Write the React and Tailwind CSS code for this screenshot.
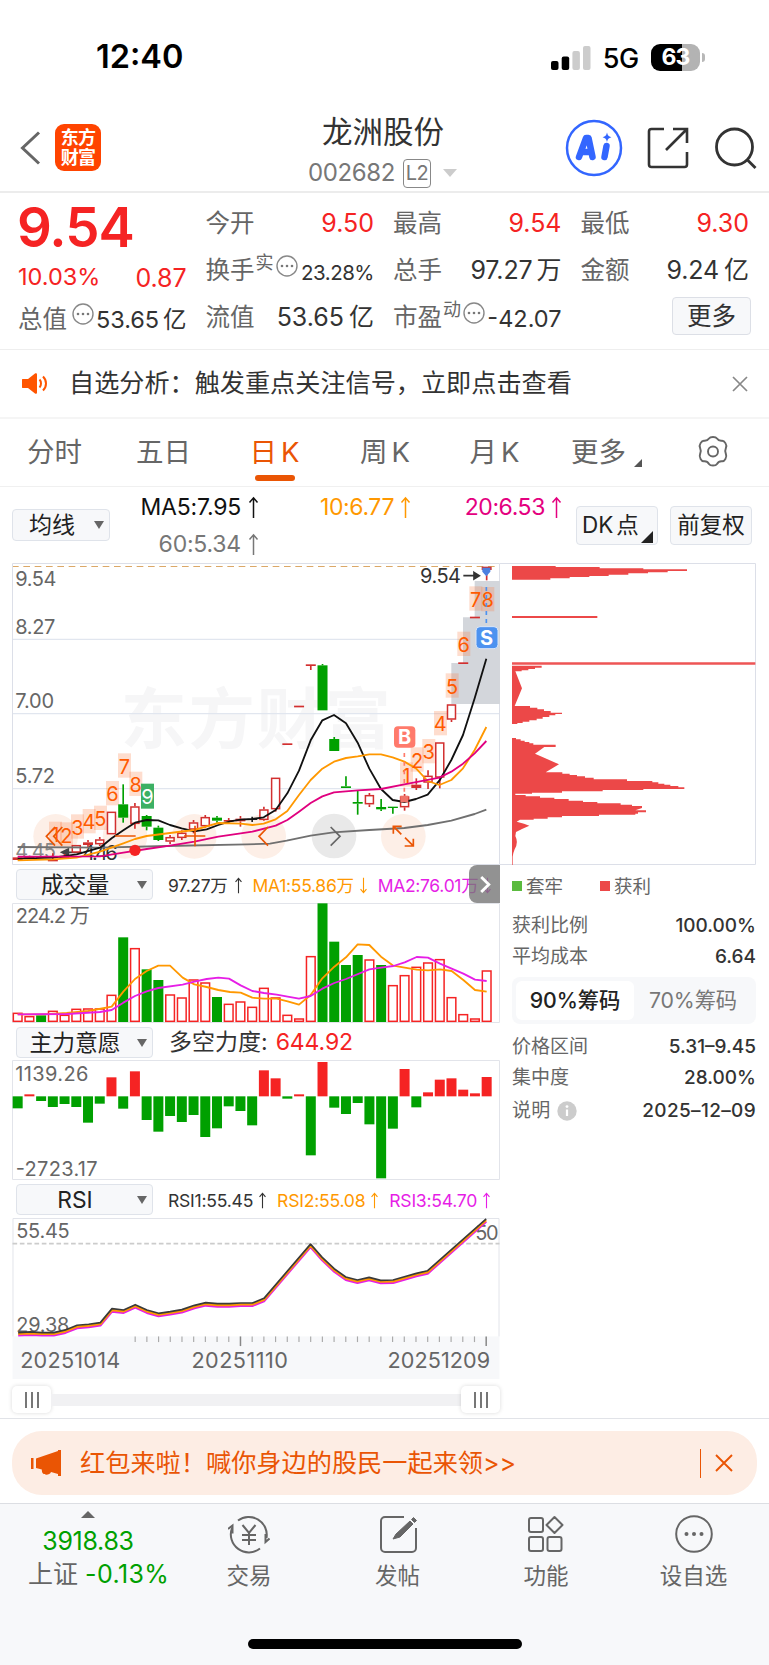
import React from "react";

const ORANGE = "#ff9800";
const MAGENTA = "#e61ee6";
const RED = "#f52323";
const GREEN = "#00a000";

// charts are drawn on a 3x grid, one candle every STEP units
const STEP = 35.175;
const barX = (i) => 53 + i * STEP;

const candles = [
  { t: "r", o: 907, c: 915 },
  { t: "r", o: 905, c: 911 },
  { t: "r", o: 903, c: 909 },
  { t: "r", o: 914, c: 919, h: 895 },
  { t: "r", o: 905, c: 911, h: 897 },
  { t: "h", o: 870, c: 893 },
  { t: "r", o: 862, c: 870, h: 855, l: 877 },
  { t: "h", o: 853, c: 868, h: 846, l: 873 },
  { t: "h", o: 770, c: 838 },
  { t: "g", o: 748, c: 788, h: 688, l: 803 },
  { t: "h", o: 754, c: 807, h: 744, l: 821 },
  { t: "g", o: 783, c: 815, h: 780, l: 826 },
  { t: "g", o: 818, c: 855, h: 812, l: 858 },
  { t: "h", o: 846, c: 860, h: 840, l: 867 },
  { t: "h", o: 833, c: 849, h: 826, l: 855 },
  { t: "h", o: 802, c: 824, h: 795, l: 835 },
  { t: "h", o: 786, c: 814, h: 780, l: 818 },
  { t: "g", o: 788, c: 797, h: 783, l: 803 },
  { t: "r", o: 795, c: 800, h: 789, l: 804 },
  { t: "r", o: 791, c: 799, h: 783, l: 815 },
  { t: "k", o: 792, c: 795, h: 785, l: 801 },
  { t: "h", o: 763, c: 795, h: 755, l: 797 },
  { t: "h", o: 668, c: 763, h: 668, l: 770 },
  { t: "r", o: 565, c: 570 },
  { t: "r", o: 452, c: 457 },
  { t: "r", o: 328, c: 333, l: 345 },
  { t: "g", o: 331, c: 466, h: 327 },
  { t: "g", o: 552, c: 588, h: 546 },
  { t: "g", o: 694, c: 699, h: 664 },
  { t: "g", o: 741, c: 746, h: 708, l: 779 },
  { t: "h", o: 720, c: 748, h: 714, l: 756 },
  { t: "g", o: 756, c: 763, h: 732, l: 768 },
  { t: "g", o: 755, c: 759, l: 776 },
  { t: "h", o: 724, c: 757, h: 717, l: 767 },
  { t: "r", o: 689, c: 699, h: 670, l: 705 },
  { t: "h", o: 662, c: 683, h: 646, l: 702 },
  { t: "h", o: 562, c: 668, l: 700 },
  { t: "h", o: 448, c: 494, l: 501 },
  { t: "r", o: 322, c: 327 },
  { t: "r", o: 185, c: 190 },
  { t: "r", o: 35, c: 45, l: 76 },
];

const volumes = [
  [458, 0], [468, 0], [466, 1], [452, 0], [464, 0], [446, 0], [445, 0], [445, 0], [404, 0], [232, 1],
  [264, 0], [328, 1], [360, 1], [403, 0], [412, 0], [358, 0], [367, 0], [411, 1], [431, 0], [424, 0],
  [440, 0], [383, 0], [412, 0], [464, 0], [475, 0], [288, 0], [130, 1], [245, 1], [315, 1], [285, 1],
  [298, 0], [315, 1], [375, 0], [345, 0], [320, 0], [307, 0], [297, 0], [411, 0], [462, 0], [475, 0],
  [331, 0],
];

const force = [
  250, 208, 228, 246, 237, 246, 293, 236, 157, 251, 139, 285, 320, 273, 291, 270, 336, 310, 244, 258, 301,
  136, 160, 221, 208, 391, 111, 248, 267, 234, 298, 460, 311, 132, 247, 202, 164, 160, 194, 205, 156,
];

const ma5 =
  "53,911 160,908 230,898 300,878 335,850 370,826 405,803 440,795 475,796 510,810 545,820 583,829 620,823 655,810 690,799 722,794 756,792 791,787 827,765 862,715 897,647 932,556 967,496 1002,480 1038,505 1073,563 1108,641 1143,702 1178,735 1213,741 1248,732 1283,719 1318,677 1354,615 1389,540 1424,430 1459,311";
const ma10 =
  "53,916 160,913 230,908 300,890 370,865 405,852 440,843 510,834 583,825 620,814 655,804 722,806 757,810 791,806 827,793 862,768 897,720 932,675 967,641 1002,620 1038,609 1073,604 1108,598 1143,598 1178,607 1213,620 1248,640 1283,678 1318,690 1354,675 1389,640 1424,585 1459,516";
const ma20 =
  "53,905 300,904 370,893 440,882 510,872 583,860 655,845 722,835 757,830 827,812 862,795 897,770 932,744 967,724 1002,712 1073,706 1143,702 1213,688 1318,668 1354,650 1389,626 1424,595 1459,558";
const ma60 =
  "53,876 300,878 500,873 740,868 810,866 860,857 932,842 1000,832 1108,825 1213,819 1283,810 1354,797 1424,777 1459,764";

const volMa1 =
  "53,463 130,463 200,459 265,453 335,440 370,395 405,357 440,333 475,317 510,317 548,353 583,373 620,381 655,390 690,396 722,398 757,413 792,416 830,416 863,424 897,434 932,405 967,355 1003,320 1038,292 1073,253 1108,255 1143,290 1180,317 1214,323 1250,329 1284,331 1320,328 1355,333 1390,360 1425,390 1460,395";
const volMa2 =
  "53,463 200,462 300,456 335,450 370,428 405,408 440,394 475,384 548,374 583,365 620,357 655,353 687,356 722,376 757,393 792,399 830,404 863,410 897,416 932,408 967,386 1003,369 1038,357 1108,328 1143,323 1180,318 1214,307 1250,291 1284,293 1320,311 1390,341 1425,359 1460,363";
const rsi =
  "53,371 90,369 125,371 160,371 195,363 230,349 265,346 300,341 335,299 370,303 405,287 440,303 475,313 510,308 545,302 583,289 617,281 652,284 687,284 722,282 757,282 792,268 932,105 967,145 1003,179 1038,204 1073,213 1108,205 1143,214 1180,213 1214,203 1250,193 1284,185 1460,29";

// nine-turn counters: [digit, x, y]
const counters = [
  ["1", 147, 800], ["2", 180, 802], ["3", 213, 778], ["4", 248, 762], ["5", 282, 752], ["6", 318, 678],
  ["7", 354, 595], ["8", 388, 650], ["1", 1200, 622], ["2", 1232, 577], ["3", 1267, 552], ["4", 1302, 468],
  ["5", 1337, 355], ["6", 1372, 230], ["7", 1408, 94], ["8", 1444, 96],
];

const Candle = ({ i, t, o, c, h = o, l = c }) => {
  const x = barX(i);
  const color = t === "g" ? GREEN : t === "k" ? "#222" : "#d22f2f";
  return (
    <g stroke={color} strokeWidth="5">
      {h < o && <path d={`M${x} ${h}V${o}`} />}
      {l > c && <path d={`M${x} ${c}V${l}`} />}
      {t === "h" ? (
        <rect x={x - 12} y={o + 2} width="24" height={c - o - 4} fill="#fff" strokeWidth="4.5" />
      ) : (
        <rect x={x - 15} y={o} width="30" height={c - o} fill={color} stroke="none" />
      )}
    </g>
  );
};

const T = ({ w, size = 60, children, ...rest }) => (
  <text fontSize={size} textLength={w} lengthAdjust="spacing" {...rest}>
    {children}
  </text>
);

const Up = ({ down, className = "w-[11px] h-[23px]" }) => (
  <svg viewBox="0 0 11 23" className={className} fill="none" stroke="currentColor" strokeWidth="1.5">
    {down ? <path d="M5.5 1v20M1.5 16.5l4 4.7 4-4.7" /> : <path d="M5.5 22V2M1.5 6.5l4-4.7 4 4.7" />}
  </svg>
);

const Dots = ({ className }) => (
  <svg viewBox="0 0 22 22" className={`w-[22px] h-[22px] shrink-0 ${className}`}>
    <circle cx="11" cy="11" r="10" fill="none" stroke="#888" strokeWidth="1.4" />
    <g fill="#777">
      <circle cx="6" cy="11" r="1.3" />
      <circle cx="11" cy="11" r="1.3" />
      <circle cx="16" cy="11" r="1.3" />
    </g>
  </svg>
);

const Caret = ({ className = "" }) => (
  <svg viewBox="0 0 10 8" className={`w-[10px] h-2 ${className}`}>
    <path d="M0 0h10L5 8z" fill="#666" />
  </svg>
);

const StatusBar = () => (
  <div className="h-[110px] pt-[5px] pl-[96px] pr-[64px] flex items-center justify-between text-black">
    <span className="text-[32.5px] font-semibold leading-none">12:40</span>
    <div className="flex items-center">
      <svg viewBox="0 0 40 24" className="w-10 h-6 mr-3">
        <rect x="0" y="15" width="7.5" height="9" rx="2" />
        <rect x="10.7" y="10.5" width="7.5" height="13.5" rx="2" />
        <rect x="21.4" y="5" width="7.5" height="19" rx="2" fill="#ccc" />
        <rect x="32" y="0" width="7.5" height="24" rx="2" fill="#ccc" />
      </svg>
      <span className="text-[27px] font-medium leading-none tracking-[-0.3px] mr-[12px] mt-[2px]">5G</span>
      <div className="w-[49px] h-[27px] rounded-[9px] bg-linear-to-r from-black from-63% to-[#b3b3b3] to-63% flex items-center justify-center">
        <span className="text-white text-[23px] font-bold leading-none tracking-[-0.8px]">63</span>
      </div>
      <div className="w-[3px] h-[9px] ml-[2px] rounded-r-full bg-[#b8b8b8]" />
    </div>
  </div>
);

const Header = () => (
  <header className="h-[83px] border-b-2 border-[#ececec] flex items-start pl-5 pr-[12px]">
    <div className="flex items-center w-[276px] mt-[14px]">
      <svg viewBox="0 0 21 34" className="w-[21px] h-[34px] mr-[14px]" fill="none" stroke="#666" strokeWidth="3">
        <path d="M19 1.5 2.5 17 19 32.5" />
      </svg>
      <div className="w-[46px] h-[47px] rounded-[9px] bg-[#ff4400] text-white text-[18px] font-bold flex flex-col items-center justify-center leading-[20px] tracking-[-0.8px]">
        <span>东方</span>
        <span>财富</span>
      </div>
    </div>
    <div className="flex flex-col items-center w-[174px] mt-[7px]">
      <h1 className="text-[30.5px] leading-none text-[#333]">龙洲股份</h1>
      <div className="flex items-center mt-[11px] text-[#777] -ml-px">
        <span className="text-[24px] leading-none tracking-[-0.4px]">002682</span>
        <span className="ml-2 w-[28px] h-[29px] rounded-[4px] border-[1.5px] border-[#888] text-[20px] leading-[27px] text-center tracking-[-0.5px]">
          L2
        </span>
        <svg viewBox="0 0 14 8" className="w-[14px] h-2 ml-3">
          <path d="M0 0h14L7 8z" fill="#ccc" />
        </svg>
      </div>
    </div>
    <div className="flex items-center mt-[9px] ml-auto">
      <svg viewBox="0 0 58 58" className="w-[58px] h-[58px] mr-[24px]">
        <circle cx="29" cy="29" r="27" fill="none" stroke="#3366ff" strokeWidth="2.5" />
        <g stroke="#3366ff" strokeWidth="6.5" strokeLinecap="round" strokeLinejoin="round" fill="none">
          <path d="M14 38 21 19h2.500l4 19M17 33h9" />
          <path d="M41.500 27 39.500 38" />
        </g>
        <path d="M42 13.500c.8 3 1.600 3.900 4.400 4.700-2.800.8-3.600 1.700-4.400 4.700-.8-3-1.600-3.900-4.400-4.700 2.800-.8 3.600-1.700 4.400-4.700z" fill="#3366ff" />
      </svg>
      <svg viewBox="0 0 42 42" className="w-[42px] h-[42px] mr-[26px]" fill="none" stroke="#333" strokeWidth="2.600">
        <path d="M17 2H4.500A2.500 2.500 0 0 0 2 4.500v33A2.500 2.500 0 0 0 4.500 40h33a2.500 2.500 0 0 0 2.500-2.500V25" />
        <path d="M26 2h14v14M39 3 19 23" />
      </svg>
      <svg viewBox="0 0 42 42" className="w-[42px] h-[42px]" fill="none" stroke="#333" strokeWidth="2.800">
        <circle cx="19.500" cy="20" r="18" />
        <path d="m32.500 33 8 8" />
      </svg>
    </div>
  </header>
);

const Label = ({ children, sup, dots }) => (
  <span className="flex items-center text-[24.5px] text-[#666]">
    {children}
    {sup && <span className="text-[18px] mb-[16px] ml-[1px]">{sup}</span>}
    {dots && <Dots className="mb-[10px] ml-[2px]" />}
  </span>
);

const Quote = () => (
  <section className="h-[157px] pl-[18px] pr-[20px] pt-[7px] grid grid-cols-4 gap-x-[19px] leading-none text-[#333] border-b border-[#eee]">
    <div>
      <div className="h-[54px] flex items-center text-[54.5px] font-semibold text-[#f52323] tracking-[-1px] -ml-px">9.54</div>
      <div className="h-10 mt-[3px] flex items-center justify-between text-[#f52323]">
        <span className="text-[23.5px] -mt-px">10.03%</span>
        <span className="text-[25px] tracking-[-0.1px] mt-[2px]">0.87</span>
      </div>
      <div className="h-11 flex items-center justify-between">
        <Label>
          总值
          <Dots className="mb-[10px] ml-[5px]" />
        </Label>
        <span className="text-[23.5px] tracking-[-0.05px] whitespace-nowrap mt-[2px]">
          53.65<span className="ml-[4px]">亿</span>
        </span>
      </div>
    </div>
    <div>
      <div className="h-[47px] flex items-center justify-between">
        <Label>今开</Label>
        <span className="text-[25px] text-[#f52323]">9.50</span>
      </div>
      <div className="h-[47px] flex items-center justify-between">
        <Label sup="实" dots>换手</Label>
        <span className="text-[20.5px] tracking-[-0.5px] mt-[6px]">23.28%</span>
      </div>
      <div className="h-[47px] flex items-center justify-between">
        <Label>流值</Label>
        <span className="text-[25px]">
          53.65<span className="ml-[5px]">亿</span>
        </span>
      </div>
    </div>
    <div>
      <div className="h-[47px] flex items-center justify-between">
        <Label>最高</Label>
        <span className="text-[25px] text-[#f52323]">9.54</span>
      </div>
      <div className="h-[47px] flex items-center justify-between">
        <Label>总手</Label>
        <span className="text-[25px] tracking-[-0.1px]">
          97.27<span className="ml-[4px]">万</span>
        </span>
      </div>
      <div className="h-[47px] flex items-center justify-between">
        <Label sup="动" dots>市盈</Label>
        <span className="text-[23.5px] mt-[3px]">-42.07</span>
      </div>
    </div>
    <div>
      <div className="h-[47px] flex items-center justify-between">
        <Label>最低</Label>
        <span className="text-[25px] text-[#f52323]">9.30</span>
      </div>
      <div className="h-[47px] flex items-center justify-between">
        <Label>金额</Label>
        <span className="text-[25px] tracking-[-0.1px]">
          9.24<span className="ml-[5px]">亿</span>
        </span>
      </div>
      <div className="h-[47px] flex items-center justify-end">
        <button className="w-[79px] h-[38px] -mr-[2px] mt-[-3px] rounded-[4px] border border-[#dcdfe6] bg-[#f7f8fa] text-[24.5px] leading-none">
          更多
        </button>
      </div>
    </div>
  </section>
);

const Notice = () => (
  <div className="h-[69px] border-b-2 border-[#f5f5f5] flex items-center pl-[22px] pr-[21px] text-[#333]">
    <svg viewBox="0 0 25 21" className="w-[25px] h-[21px] mr-[22px]">
      <path d="M1 6h5l7-5.500c1-.7 2-.2 2 1v18c0 1.200-1 1.700-2 1L6 15H1c-1 0-1-.5-1-1V7c0-.5 0-1 1-1z" fill="#ff5500" />
      <path d="M17.500 6.500c2 2 2 6 0 8M21 3.500c4 4 4 10 0 14" fill="none" stroke="#ff5500" strokeWidth="2" />
    </svg>
    <span className="text-[25.15px] leading-none mt-px">自选分析：触发重点关注信号，立即点击查看</span>
    <svg viewBox="0 0 16 16" className="w-4 h-4 ml-auto" stroke="#888" strokeWidth="1.700">
      <path d="m1 1 14 14M15 1 1 15" />
    </svg>
  </div>
);

const Tabs = () => (
  <nav className="h-[68px] border-b border-[#f0f0f0] flex text-[27.5px] leading-none text-[#666]">
    <span className="w-[109px] pt-5 text-center">分时</span>
    <span className="w-[109px] pt-5 text-center">五日</span>
    <span className="w-[113px] pt-5 flex flex-col items-center text-[#ea5504]">
      <span>
        日<span className="ml-[4px]">K</span>
      </span>
      <i className="w-10 h-[6px] mt-[8px] rounded-full bg-[#ea5504]" />
    </span>
    <span className="w-[108px] pt-5 text-center">
      周<span className="ml-[4px]">K</span>
    </span>
    <span className="w-[111px] pt-5 text-center">
      月<span className="ml-[4px]">K</span>
    </span>
    <span className="w-[115px] pt-5 pl-[21px] flex">
      更多
      <svg viewBox="0 0 8 8" className="w-2 h-2 mt-5 ml-2">
        <path d="M8 0v8H0z" fill="#555" />
      </svg>
    </span>
    <svg viewBox="0 0 34 34" className="w-[34px] h-[34px] mt-4 ml-[31px]" fill="none" stroke="#666" strokeWidth="1.900" strokeLinejoin="round">
      <path d="M13 3.500c1.300-2 6.700-2 8 0 1.200 1.900 2.700 2.500 5 2.200 2.600-.2 5.200 4.400 4 6.800-1 2.200-1 4.800 0 7 1.200 2.500-1.400 7-4 6.800-2.300-.2-3.800.6-5 2.600-1.300 2.200-6.700 2.200-8 0-1.200-2-2.700-2.800-5-2.600-2.600.2-5.200-4.300-4-6.800 1-2.200 1-4.800 0-7C2.800 10.100 5.400 5.500 8 5.700c2.300.2 3.800-.3 5-2.200z" />
      <circle cx="17" cy="16.500" r="5" />
    </svg>
  </nav>
);

const Averages = () => (
  <div className="h-[76px] flex text-[23px] leading-none text-[#222]">
    <button className="w-[98px] h-[32px] ml-3 mt-[22px] rounded-[4px] border border-[#dfe3ea] bg-[#f7f8fa] flex items-center pl-[16px] pr-[5px]">
      <span className="mt-px">均线</span>
      <Caret className="ml-auto" />
    </button>
    <div className="w-[149px] flex flex-col items-end pt-[8px]">
      <span className="flex items-center text-[#111] h-[25px] gap-[7px] tracking-[-0.2px]">
        MA5:7.95 <Up />
      </span>
      <span className="flex items-center text-[#777] h-[25px] mt-[12px] gap-[7px] tracking-[-0.2px]">
        60:5.34 <Up />
      </span>
    </div>
    <span className="w-[152px] flex items-center justify-end text-[#ff9800] h-[25px] mt-[8px] gap-[6px] tracking-[-0.4px]">
      10:6.77 <Up />
    </span>
    <span className="w-[151px] flex items-center justify-end text-[#e4007f] h-[25px] mt-[8px] gap-[6px] tracking-[-0.4px]">
      20:6.53 <Up />
    </span>
    <button className="w-[82px] h-[39px] ml-[14px] mt-[19px] rounded-[4px] border border-[#dfe3ea] bg-[#f7f8fa] flex items-center pl-[5px] text-[22.5px]">
      DK<span className="ml-[3px]">点</span>
      <svg viewBox="0 0 12 12" className="w-3 h-3 mt-[22px] ml-0.5 shrink-0">
        <path d="M12 0v12H0z" fill="#222" />
      </svg>
    </button>
    <button className="w-[82px] h-[39px] ml-[12px] mt-[19px] rounded-[4px] border border-[#dfe3ea] bg-[#f7f8fa] text-[22.5px] leading-none">
      前复权
    </button>
  </div>
);

const KLine = () => (
  <svg viewBox="36 24 1464 906" className="w-[488px] h-[302px] block" fill="none">
    <T x="362" y="563" w="810" size="198" fontWeight="700" fill="#f6f6f7">东方财富</T>
    <path d="M36 253h1464M36 476h1464M36 701h1464" stroke="#e1e6ef" strokeWidth="4" />
    <path d="M36 34.500h1464" stroke="#dba868" strokeWidth="3" strokeDasharray="20 14" />
    <path d="M37.500 25.500h1461v903h-1461z" stroke="#dcdfe8" strokeWidth="3" />
    <path d="M1354 447V324h35V187h35V78h76v369z" fill="#d3d6db" />
    {[167, 375, 583, 791, 1210].map((x) => (
      <circle key={x} cx={x} cy="844" r="67" fill="#fdefe7" />
    ))}
    <circle cx="1002" cy="843" r="67" fill="#e9e9e9" />
    {counters.map(([n, x, y]) => (
      <rect key={x} x={x} y={y} width="39" height="73" fill="#fa783c" fillOpacity="0.25" />
    ))}
    <g fill="#666">
      <T x="46" y="92" w="123">9.54</T>
      <T x="46" y="236" w="120">8.27</T>
      <T x="46" y="460" w="116">7.00</T>
      <T x="46" y="685" w="119">5.72</T>
      <T x="46" y="909" w="122" fill="#888">4.45</T>
    </g>
    <T x="247" y="914" w="106" fill="#333">4.46</T>
    <path d="M245 892h-55M205 882l-20 10 20 10z" stroke="#444" strokeWidth="5" fill="#444" />
    <rect x="423" y="686" width="39" height="75" fill="#3cb064" />
    {candles.map((c, i) => (
      <Candle key={i} i={i} {...c} />
    ))}
    <g strokeWidth="5.5" strokeLinejoin="round">
      <polyline points={ma60} stroke="#707070" />
      <polyline points={ma5} stroke="#111" />
      <polyline points={ma10} stroke={ORANGE} />
      <polyline points={ma20} stroke="#e0007f" />
    </g>
    <g stroke="#ea5504" strokeWidth="5">
      <path d="m165 816-26 28 26 28M187 816l-26 28 26 28" />
      <path d="M345 843h62M552 843h64M585 812v62" />
      <path d="m804 816-27 28 27 28" />
      <path d="M1180 836v-22h25M1181 815l23 23M1240 851v22h-26M1239 872l-24-24" />
    </g>
    <path d="m992 816 28 28-28 28" stroke="#666" strokeWidth="5" />
    <circle cx="405" cy="886" r="17" fill={RED} />
    <g fill="#ff5a00" textAnchor="middle" fontSize="60">
      {counters.map(([n, x, y]) => (
        <text key={x} x={x + 19} y={y + 61}>{n}</text>
      ))}
      <text x="442" y="748" fill="#fff">9</text>
    </g>
    <path d="M1213 594v128" stroke="#ff7a6b" strokeWidth="5" strokeDasharray="12 14" />
    <rect x="1201" y="722" width="24" height="20" fill="#f0736a" />
    <rect x="1182" y="514" width="64" height="64" rx="12" fill="#ff7a6b" />
    <path d="M1459 96v118" stroke="#4c92f0" strokeWidth="5" strokeDasharray="12 12" />
    <rect x="1428" y="215" width="66" height="66" rx="12" fill="#4c92f0" stroke="#dbe7f8" strokeWidth="3" />
    <g fill="#fff" fontSize="60" fontWeight="700" textAnchor="middle">
      <text x="1214" y="568">B</text>
      <text x="1460" y="269">S</text>
    </g>
    <path d="M1447 38h24v12l-12 14-12-14z" fill="#4c7fe0" />
    <T x="1260" y="85" w="123" fill="#333">9.54</T>
    <path d="M1390 62h44M1422 52l16 10-16 10z" stroke="#333" strokeWidth="5" fill="#333" />
  </svg>
);

const Select = ({ children }) => (
  <button className="w-[137px] h-[31px] shrink-0 rounded-[4px] border border-[#dfe3ea] bg-[#f7f8fa] flex items-center pr-[5px] text-[22.8px] leading-none text-[#222]">
    <span className="flex-1 text-center pr-[4px] mt-px">{children}</span>
    <Caret />
  </button>
);

const Volume = () => (
  <>
    <div className="h-[38px] pt-[4px] pl-1 flex items-start relative text-[17.5px] leading-none whitespace-nowrap overflow-hidden">
      <Select>成交量</Select>
      <div className="h-[31px] ml-[15px] mt-px flex items-center text-[#333] tracking-[-0.3px]">
        97.27万 <Up className="w-[9px] h-[17px] ml-[6px]" />
        <span className="flex items-center text-[#ff9800] ml-[10px]">
          MA1:55.86万 <Up down className="w-[9px] h-[17px] ml-[5px]" />
        </span>
        <span className="flex items-center text-[#e61ee6] ml-[10px]">
          MA2:76.01万 <Up down className="w-[9px] h-[17px] ml-[5px]" />
        </span>
      </div>
      <div className="absolute right-0 top-0 w-[31px] h-[38px] rounded-l-[8px] bg-[#777]/80 flex items-center justify-center">
        <svg viewBox="0 0 12 20" className="w-[12px] h-[19px]" fill="none" stroke="#fff" strokeWidth="3">
          <path d="m2 2 8 8-8 8" />
        </svg>
      </div>
    </div>
    <svg viewBox="36 129 1464 360" className="w-[488px] h-[120px] block" fill="none">
      <path d="M37.500 130.500h1461v357h-1461z" stroke="#e2e4ea" strokeWidth="3" />
      {volumes.map(([y, g], i) =>
        g ? (
          <rect key={i} x={barX(i) - 15} y={y} width="30" height={486 - y} fill={GREEN} />
        ) : (
          <rect key={i} x={barX(i) - 13} y={y + 2} width="26" height={482 - y} fill="#fff" stroke={RED} strokeWidth="4.5" />
        )
      )}
      <polyline points={volMa1} stroke={ORANGE} strokeWidth="5.5" strokeLinejoin="round" />
      <polyline points={volMa2} stroke={MAGENTA} strokeWidth="5.5" strokeLinejoin="round" />
      <T x="47" y="190" w="222" fill="#666">224.2 万</T>
    </svg>
  </>
);

const Force = () => (
  <>
    <div className="h-[37px] pt-[4px] pl-1 flex items-start">
      <Select>主力意愿</Select>
      <div className="h-[31px] ml-4 flex items-center text-[23px] leading-none text-[#333]">
        多空力度:<span className="ml-2 text-[#f52323] tracking-[-0.1px]">644.92</span>
      </div>
    </div>
    <svg viewBox="36 105 1464 360" className="w-[488px] h-[120px] block" fill="none">
      <path d="M37.500 106.500h1461v357h-1461z" stroke="#e2e4ea" strokeWidth="3" />
      {force.map((y, i) => (
        <rect
          key={i}
          x={barX(i) - 15}
          y={Math.min(y, 214)}
          width="30"
          height={Math.abs(y - 214)}
          fill={y < 214 ? RED : GREEN}
        />
      ))}
      <T x="46" y="167" w="219" fill="#666">1139.26</T>
      <T x="47" y="452" w="246" fill="#666">-2723.17</T>
    </svg>
  </>
);

const Rsi = () => (
  <>
    <div className="h-[38px] pt-[4px] pl-1 flex items-start">
      <Select>RSI</Select>
      <div className="h-[31px] ml-[15px] mt-px flex items-center text-[17.6px] leading-none text-[#333] tracking-[-0.25px]">
        RSI1:55.45 <Up className="w-[9px] h-[17px] ml-[5px]" />
        <span className="flex items-center text-[#ff9800] ml-[10px]">
          RSI2:55.08 <Up className="w-[9px] h-[17px] ml-[5px]" />
        </span>
        <span className="flex items-center text-[#e61ee6] ml-[10px]">
          RSI3:54.70 <Up className="w-[9px] h-[17px] ml-[5px]" />
        </span>
      </div>
    </div>
    <svg viewBox="36 24 1464 484" className="w-[488px] h-[161px] block" fill="none">
      <rect x="36" y="380" width="1464" height="128" fill="#f7f8fa" />
      <path d="M37.500 380V25.500h1461V380" stroke="#e2e4ea" strokeWidth="3" />
      <path d="M36 101h1464" stroke="#ccc" strokeWidth="5" strokeDasharray="14 8" />
      <g fill="#666">
        <T x="47" y="84" w="161">55.45</T>
        <T x="47" y="368" w="160">29.38</T>
        <T x="1427" y="90" w="70">50</T>
      </g>
      <g strokeWidth="7" strokeLinejoin="round">
        <polyline points={rsi} stroke={MAGENTA} transform="translate(0 6)" />
        <polyline points={rsi} stroke={ORANGE} transform="translate(0 1.500)" />
        <polyline points={rsi} stroke="#3a3a3a" strokeWidth="5" transform="translate(0 -2.500)" />
      </g>
      {Array.from({ length: 31 }, (_, k) => k + 10).map((i) => (
        <path
          key={i}
          d={`M${barX(i)} 380v${i === 19 || i === 40 ? 29 : 17}`}
          stroke={i === 19 || i === 40 ? "#888" : "#aaa"}
          strokeWidth={i === 19 || i === 40 ? 4.5 : 3.5}
        />
      ))}
      <g fill="#666">
        <T x="59" y="475" w="301" size="65">20251014</T>
        <T x="574" y="475" w="290" size="65">20251110</T>
        <T x="1163" y="475" w="309" size="65">20251209</T>
      </g>
    </svg>
    <div className="h-[41px] flex items-center justify-between">
      <Handle />
      <div className="flex-1 h-3 bg-[#f1f1f3]" />
      <Handle />
    </div>
  </>
);

const Handle = () => (
  <div className="w-[39px] h-[27px] rounded-[5px] bg-white shadow-[0_0_4px_rgba(0,0,0,0.15)] flex items-center justify-center gap-1">
    <i className="w-[2px] h-4 bg-[#777]" />
    <i className="w-[2px] h-4 bg-[#777]" />
    <i className="w-[2px] h-4 bg-[#777]" />
  </div>
);

const chipShapes = [
  "M36 33h131v3h132v4h131v3h131v5h-58v4h-59v3h-59v4h-59v4h-58v3h-59v4h-58v4H36z",
  "M36 183h256v6H36z",
  "M36 332h89v6h-20v4H85v4H65v3H46l20 51-22 53h46v5h22v5h20v5h20v5h34v4h-20v4h-18v5h-20v5h-18v5H88v4H68v4H52v3H36z",
  "M36 549h12v4h14v4h12v4h14v4h12v4h67v7h-34l-28 20 36 16 36 16-20 12-20 12h50v4h22v4h22v4h24v4h26v5h100v5h76v4h18v4h18v3h18v4h24v4h18v5H430v3H308v4H186v4H96v3H46v4h31v4h43v4h43v4h43v5h43v4h43v4h70v4h34v4h30v6l-20 7h32v6h-24v4h-8v3H297v4H186v4h-43v4h-42v3H60l-10 6 22 6 16 6-22 10-18 9-2 12q10 20-2 40-5 12-6 22v40H36z",
];

const InfoRow = ({ label, value, children }) => (
  <div className="h-[31px] flex items-center justify-between text-[19px] leading-none text-[#666]">
    <span className="flex items-center">
      {label}
      {children}
    </span>
    <span className="text-[#333] font-medium">{value}</span>
  </div>
);

const Chips = () => (
  <aside className="w-[256px]">
    <svg viewBox="0 24 768 906" className="w-[256px] h-[302px] block" fill="none">
      <path d="M0 25.500h766.500v903H0" stroke="#dcdfe8" strokeWidth="3" />
      {chipShapes.map((d) => (
        <path key={d} d={d} fill="#ec4848" />
      ))}
      <path d="M36 325.500h730" stroke="#ee5555" strokeWidth="7" />
    </svg>
    <div className="pl-[12px]">
      <div className="h-[42px] mb-[3px] flex items-center text-[18.5px] leading-none text-[#666]">
        <i className="w-[10px] h-[10px] bg-[#5bbb3f] mr-1" />
        套牢
        <i className="w-[10px] h-[10px] bg-[#ec4848] mr-1 ml-[37px]" />
        获利
      </div>
      <InfoRow label="获利比例" value="100.00%" />
      <InfoRow label="平均成本" value="6.64" />
      <div className="h-[47px] mt-[5px] mb-[7px] rounded-[8px] bg-[#f7f8fa] p-1 flex text-[21.3px] leading-none tracking-[-0.1px]">
        <span className="w-[118px] rounded-[6px] bg-white flex items-center justify-center font-medium text-[#222]">90%筹码</span>
        <span className="flex-1 flex items-center justify-center text-[#777]">70%筹码</span>
      </div>
      <InfoRow label="价格区间" value="5.31–9.45" />
      <InfoRow label="集中度" value="28.00%" />
      <div className="pt-[2px] tracking-[0.35px]">
        <InfoRow label="说明" value="2025–12–09">
          <svg viewBox="0 0 20 20" className="w-5 h-5 ml-[6px]">
            <circle cx="10" cy="10" r="9.700" fill="#ccc" />
            <path d="M10 8.500V15" stroke="#fff" strokeWidth="2.200" />
            <circle cx="10" cy="5.600" r="1.400" fill="#fff" />
          </svg>
        </InfoRow>
      </div>
    </div>
  </aside>
);

const Promo = () => (
  <div className="h-[85px] border-t border-[#e1e3e8] pt-3 px-3">
    <div className="h-[64px] rounded-[30px] bg-[#fdede4] flex items-center pl-[19px] pr-[24px] text-[#ea5504]">
      <svg viewBox="0 0 31 26" className="w-[31px] h-[26px] mr-[18px]" fill="#ea5504">
        <path d="M0 8h2.500v11H0zM5 8.500 27 1V0h3v26h-3v-2l-7-2c-1 3-6 3.500-8 1.500-1-1-1.200-2.500-1.200-4L5 18z" />
      </svg>
      <span className="text-[25.2px] leading-none whitespace-nowrap mt-px">
        红包来啦！喊你身边的股民一起来领<span className="text-[25px]">&gt;&gt;</span>
      </span>
      <i className="w-[1.500px] h-[29px] bg-[#ea5504] ml-auto" />
      <svg viewBox="0 0 18 18" className="w-[18px] h-[18px] ml-[14px]" stroke="#ea5504" strokeWidth="1.900">
        <path d="m1 1 16 16M17 1 1 17" />
      </svg>
    </div>
  </div>
);

const NavItem = ({ label, className, children }) => (
  <div className={`flex flex-col items-center pt-[9px] ${className}`}>
    <svg viewBox="0 0 42 42" className="w-[42px] h-[42px]" fill="none" stroke="#666" strokeWidth="2">
      {children}
    </svg>
    <span className="mt-[10px] text-[22.5px] leading-none whitespace-nowrap">{label}</span>
  </div>
);

const BottomNav = () => (
  <footer className="h-[162px] border-t-[1.500px] border-[#dcdee3] bg-[#f7f8fa] text-[#666]">
    <div className="flex h-[135px]">
      <div className="w-[176px] flex flex-col items-center pt-[7px] leading-none">
        <svg viewBox="0 0 14 7" className="w-[14px] h-[7px]">
          <path d="M7 0l7 7H0z" fill="#666" />
        </svg>
        <span className="mt-[11px] text-[25px] tracking-[-0.3px] text-[#00a000]">3918.83</span>
        <span className="mt-[8px] pl-[20px] self-start ml-2 text-[25px] whitespace-nowrap">
          上证 <span className="text-[#00a000] tracking-[0.4px]">-0.13%</span>
        </span>
      </div>
      <NavItem label="交易" className="w-[146px]">
        <path d="M10 7.500A18 18 0 0 1 38.500 25M32 35.500A18 18 0 0 1 4 15" />
        <path d="M0 16l4.500-3.500v8M41.500 25.500 37.500 29l0-8" />
        <path d="m14.500 12 6.500 8 6.500-8M21 20v12M14 22h14M14 27h14" />
      </NavItem>
      <NavItem label="发帖" className="w-[151px]">
        <path d="M27 4H8a4 4 0 0 0-4 4v27a4 4 0 0 0 4 4h27a4 4 0 0 0 4-4V15" />
        <path d="m16 26 3-5L33 8l3 3-13 13zM34.500 6.500 36.500 4.500l3 3-2 2z" fill="#666" strokeWidth="1" />
      </NavItem>
      <NavItem label="功能" className="w-[146px]">
        <rect x="4" y="5" width="14" height="14" rx="2" />
        <rect x="4" y="24" width="14" height="14" rx="2" />
        <rect x="22.500" y="24" width="14" height="14" rx="2" />
        <path d="m29.500 4 8 8-8 8-8-8z" strokeLinejoin="round" />
      </NavItem>
      <NavItem label="设自选" className="w-[149px]">
        <circle cx="21" cy="21" r="17.800" />
        <g fill="#666" stroke="none">
          <circle cx="13.500" cy="21" r="2" />
          <circle cx="21" cy="21" r="2" />
          <circle cx="28.500" cy="21" r="2" />
        </g>
      </NavItem>
    </div>
    <div className="w-[274px] h-[10px] ml-[248px] rounded-full bg-black" />
  </footer>
);

export default function App() {
  return (
    <div className="w-[769px] h-[1665px] bg-white overflow-hidden font-['Inter','Noto_Sans_CJK_SC',sans-serif]">
      <StatusBar />
      <Header />
      <Quote />
      <Notice />
      <Tabs />
      <Averages />
      <main className="flex pl-3 h-[855px]">
        <div className="w-[488px]">
          <KLine />
          <Volume />
          <Force />
          <Rsi />
        </div>
        <Chips />
      </main>
      <Promo />
      <BottomNav />
    </div>
  );
}
